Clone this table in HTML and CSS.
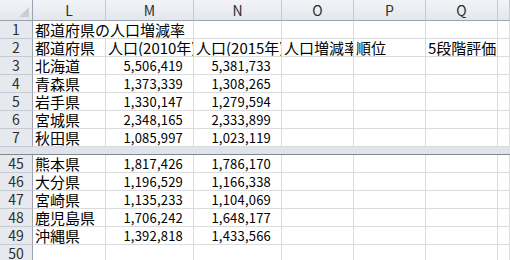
FILE: index.html
```html
<!DOCTYPE html>
<html lang="ja">
<head>
  <meta charset="UTF-8" />
  <title>人口増減率</title>
  <link rel="stylesheet" href="styles.css">
</head>
<body>

<div class="sheet">
  <div class="row head">
    <div class="cell corner"><span class="tri"></span></div>
    <div class="cell">L</div>
    <div class="cell">M</div>
    <div class="cell">N</div>
    <div class="cell">O</div>
    <div class="cell">P</div>
    <div class="cell">Q</div>
    <div class="cell"></div>
  </div>

  <div class="row">
    <div class="cell rowhead">1</div>
    <div class="cell wide">都道府県の人口増減率</div>
    <div class="cell"></div>
    <div class="cell"></div>
    <div class="cell"></div>
    <div class="cell"></div>
    <div class="cell"></div>
  </div>
  <div class="row">
    <div class="cell rowhead">2</div>
    <div class="cell">都道府県</div>
    <div class="cell clip">人口(2010年)</div>
    <div class="cell clip">人口(2015年)</div>
    <div class="cell clip">人口増減率</div>
    <div class="cell">順位</div>
    <div class="cell">5段階評価</div>
    <div class="cell"></div>
  </div>
  <div class="row">
    <div class="cell rowhead">3</div>
    <div class="cell">北海道</div>
    <div class="cell num">5,506,419</div>
    <div class="cell num">5,381,733</div>
    <div class="cell"></div><div class="cell"></div><div class="cell"></div><div class="cell"></div>
  </div>
  <div class="row">
    <div class="cell rowhead">4</div>
    <div class="cell">青森県</div>
    <div class="cell num">1,373,339</div>
    <div class="cell num">1,308,265</div>
    <div class="cell"></div><div class="cell"></div><div class="cell"></div><div class="cell"></div>
  </div>
  <div class="row">
    <div class="cell rowhead">5</div>
    <div class="cell">岩手県</div>
    <div class="cell num">1,330,147</div>
    <div class="cell num">1,279,594</div>
    <div class="cell"></div><div class="cell"></div><div class="cell"></div><div class="cell"></div>
  </div>
  <div class="row">
    <div class="cell rowhead">6</div>
    <div class="cell">宮城県</div>
    <div class="cell num">2,348,165</div>
    <div class="cell num">2,333,899</div>
    <div class="cell"></div><div class="cell"></div><div class="cell"></div><div class="cell"></div>
  </div>
  <div class="row">
    <div class="cell rowhead">7</div>
    <div class="cell">秋田県</div>
    <div class="cell num">1,085,997</div>
    <div class="cell num">1,023,119</div>
    <div class="cell"></div><div class="cell"></div><div class="cell"></div><div class="cell"></div>
  </div>

  <!-- split pane divider -->
  <div class="split"></div>

  <div class="row">
    <div class="cell rowhead">45</div>
    <div class="cell">熊本県</div>
    <div class="cell num">1,817,426</div>
    <div class="cell num">1,786,170</div>
    <div class="cell"></div><div class="cell"></div><div class="cell"></div><div class="cell"></div>
  </div>
  <div class="row">
    <div class="cell rowhead">46</div>
    <div class="cell">大分県</div>
    <div class="cell num">1,196,529</div>
    <div class="cell num">1,166,338</div>
    <div class="cell"></div><div class="cell"></div><div class="cell"></div><div class="cell"></div>
  </div>
  <div class="row">
    <div class="cell rowhead">47</div>
    <div class="cell">宮崎県</div>
    <div class="cell num">1,135,233</div>
    <div class="cell num">1,104,069</div>
    <div class="cell"></div><div class="cell"></div><div class="cell"></div><div class="cell"></div>
  </div>
  <div class="row">
    <div class="cell rowhead">48</div>
    <div class="cell">鹿児島県</div>
    <div class="cell num">1,706,242</div>
    <div class="cell num">1,648,177</div>
    <div class="cell"></div><div class="cell"></div><div class="cell"></div><div class="cell"></div>
  </div>
  <div class="row">
    <div class="cell rowhead">49</div>
    <div class="cell">沖縄県</div>
    <div class="cell num">1,392,818</div>
    <div class="cell num">1,433,566</div>
    <div class="cell"></div><div class="cell"></div><div class="cell"></div><div class="cell"></div>
  </div>
  <div class="row">
    <div class="cell rowhead">50</div>
    <div class="cell"></div><div class="cell"></div><div class="cell"></div>
    <div class="cell"></div><div class="cell"></div><div class="cell"></div><div class="cell"></div>
  </div>
</div>

</body>
</html>
```

FILE: styles.css
```css
* {
  box-sizing: border-box;
}

body {
  margin: 0;
  background: #fff;
  font-family: "Noto Sans CJK JP", "Noto Sans", sans-serif;
  font-size: 15px;
  color: #000;
  overflow: hidden;
}

.sheet {
  width: 510px;
  height: 260px;
  overflow: hidden;
}

.row {
  display: grid;
  grid-template-columns: 33px 73px 88px 88px 72px 72px 72px 1fr;
  height: 18px;
}

.cell {
  border-right: 1px solid #dadcdd;
  border-bottom: 1px solid #dadcdd;
  padding: 0 2px;
  line-height: 17px;
  white-space: nowrap;
}

/* header text too long for its column is cut at the next cell */
.cell.clip {
  overflow: hidden;
}

/* title text runs on into the empty cell to its right */
.cell.wide {
  grid-column: span 2;
}

.cell.num {
  font-size: 13px;
  text-align: right;
  padding-right: 10px;
  letter-spacing: 0.2px;
}

/* column letters */
.head {
  height: 21px;
}

.head .cell {
  background: linear-gradient(#f2f4f7, #e3e7ed);
  border-right-color: #c5cad3;
  border-bottom-color: #9ba3b0;
  text-align: center;
  line-height: 20px;
  font-size: 14px;
  color: #2f2f2f;
}

.head .corner {
  position: relative;
  border-right-color: #9ba3b0;
}

.tri {
  position: absolute;
  right: 3px;
  bottom: 3px;
  width: 0;
  height: 0;
  border-left: 10px solid transparent;
  border-bottom: 10px solid #c9ced6;
}

/* row numbers */
.cell.rowhead {
  background: #e6e9ee;
  border-right-color: #9ba3b0;
  border-bottom-color: #c5cad3;
  text-align: center;
  font-size: 14px;
  color: #2f2f2f;
}

.split {
  height: 8px;
  background: #dee3ee;
  border-bottom: 1px solid #878787;
}
```
